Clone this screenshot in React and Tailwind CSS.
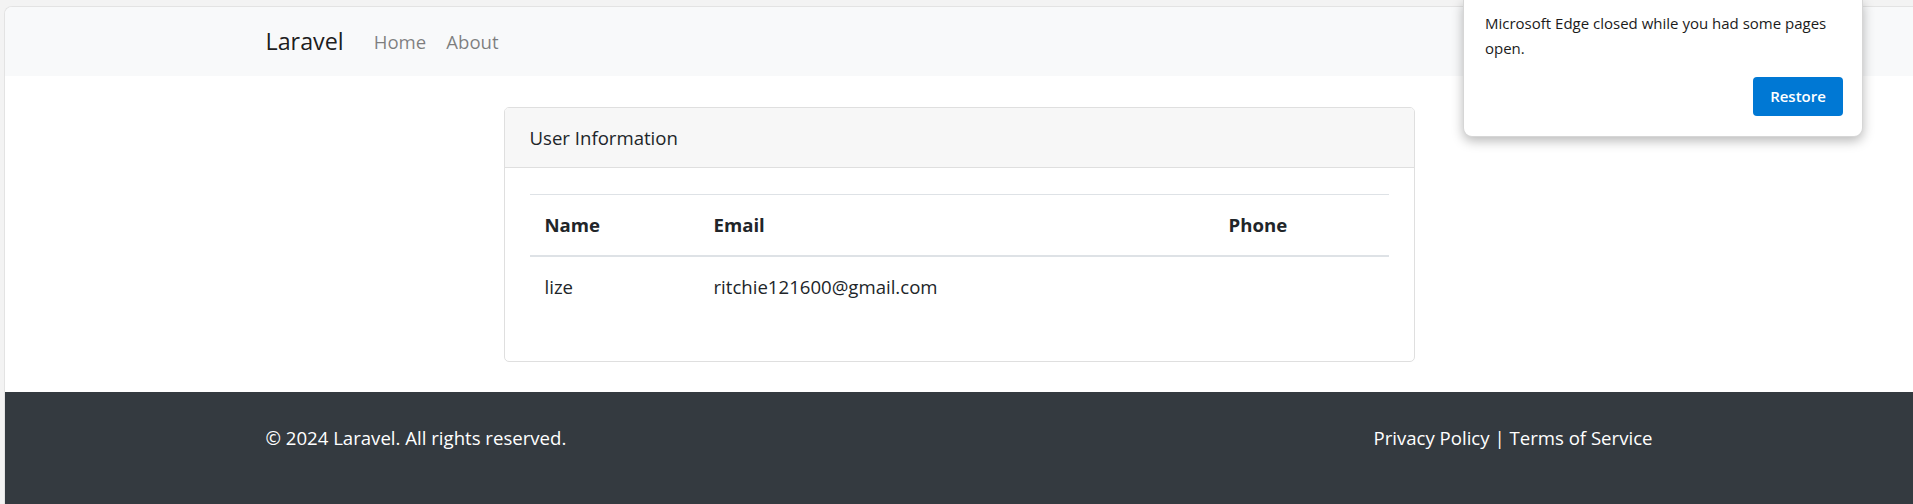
import React from 'react';

const users = [
  { name: 'lize', email: 'ritchie121600@gmail.com', phone: '' },
];

const RestorePopup = () => (
  <div className="absolute top-0 left-[1463px] w-[400px] h-[137px] bg-white rounded-b-[9px] shadow-[0_4px_12px_rgba(0,0,0,0.28)] border border-t-0 border-[#d6d6d6] pl-[21px] pr-[19px] pt-[11px] flex flex-col">
    <p className="text-[15px] leading-[25px] text-[#1b1b1b]">
      Microsoft Edge closed while you had some pages open.
    </p>
    <div className="flex justify-end mt-auto mb-[20px]">
      <button className="w-[90px] h-[39px] rounded-[4px] bg-[#0078d4] text-white text-[15px] font-semibold">
        Restore
      </button>
    </div>
  </div>
);

export default function App() {
  return (
    <div className="relative min-h-screen bg-[#f3f3f3] pl-[4px] pt-[6px] font-['Open_Sans',sans-serif] text-[#212529]">
      <div className="min-h-[498px] bg-white rounded-tl-[8px] border-l border-t border-[#e3e3e3] flex flex-col overflow-hidden">
        {/* Navbar */}
        <nav className="h-[69px] bg-[#f8f9fa] flex items-center">
          <div className="w-[1387px] mx-auto flex items-center">
            <a className="text-[23.3px] leading-[37px] text-black/90 mr-[20px]">Laravel</a>
            <a className="text-[18.6px] leading-[30px] text-black/50 px-[10px]">Home</a>
            <a className="text-[18.6px] leading-[30px] text-black/50 px-[10px]">About</a>
          </div>
        </nav>

        {/* Content */}
        <main className="pt-[31px] pb-[30px]">
          <div className="w-[911px] mx-auto border border-[#dfdfdf] rounded-[5px] overflow-hidden">
            <div className="h-[60px] bg-[#f7f7f7] border-b border-[#dfdfdf] px-[25px] flex items-center text-[18.6px]">
              User Information
            </div>
            <div className="px-[25px] pt-[26px] pb-[44px]">
              <table className="w-full text-[18.6px] leading-[30px] border-collapse">
                <thead>
                  <tr className="border-t border-[#dee2e6] border-b-2">
                    <th className="w-[169px] text-left font-bold px-[15px] py-[15px]">Name</th>
                    <th className="w-[515px] text-left font-bold px-[15px] py-[15px]">Email</th>
                    <th className="text-left font-bold px-[15px] py-[15px]">Phone</th>
                  </tr>
                </thead>
                <tbody>
                  {users.map((u) => (
                    <tr key={u.email} className="border-t border-[#dee2e6]">
                      <td className="px-[15px] py-[15px]">{u.name}</td>
                      <td className="px-[15px] py-[15px]">{u.email}</td>
                      <td className="px-[15px] py-[15px]">{u.phone}</td>
                    </tr>
                  ))}
                </tbody>
              </table>
            </div>
          </div>
        </main>

        {/* Footer */}
        <footer className="flex-1 bg-[#343a40] text-white pt-[31px] pb-[30px]">
          <div className="w-[1387px] mx-auto flex justify-between text-[18.6px] leading-[30px]">
            <p>&copy; 2024 Laravel. All rights reserved.</p>
            <p>
              <a>Privacy Policy</a> | <a>Terms of Service</a>
            </p>
          </div>
        </footer>
      </div>

      <RestorePopup />
    </div>
  );
}
